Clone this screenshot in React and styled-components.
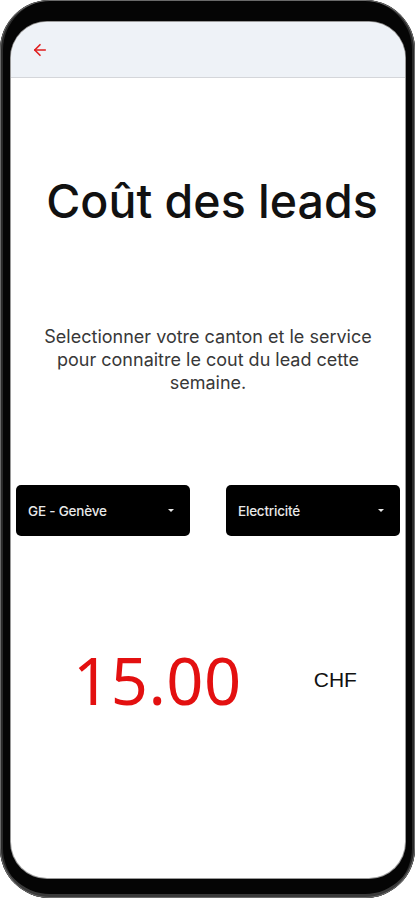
import React from "react";
import styled, { createGlobalStyle } from "styled-components";

const Global = createGlobalStyle`
  html, body { margin: 0; padding: 0; background: #ffffff; }
  body { font-family: Inter, "Noto Sans", sans-serif; }
  * { box-sizing: border-box; }
`;

const Frame = styled.div`
  width: 415px;
  height: 898px;
  background: #050505;
  border-radius: 50px;
  padding: 22px 10px 20px 11px;
  box-shadow: inset 0 0 0 1px #6a6a6a, inset 0 -4px 0 0 #3a3a3a, inset 3px 0 0 0 #2a2a2a,
    inset -3px 0 0 0 #2a2a2a;
  display: flex;
`;

const Screen = styled.div`
  flex: 1;
  background: #ffffff;
  border-radius: 36px;
  overflow: hidden;
  display: flex;
  flex-direction: column;
  box-shadow: 0 0 0 1px #9a9a9a;
`;

const Header = styled.header`
  height: 56px;
  background: #eef2f7;
  border-bottom: 1px solid #d4d6da;
  display: flex;
  align-items: center;
  padding-left: 20px;
  color: #e01e1e;
`;

const Title = styled.h1`
  margin: 95px 0 0;
  text-align: center;
  font-family: Inter, sans-serif;
  font-weight: 500;
  font-size: 46.5px;
  line-height: 56px;
  letter-spacing: 0px;
  color: #111111;
  padding-left: 8px;
`;

const Lead = styled.p`
  margin: 96px auto 0;
  width: 350px;
  text-align: center;
  font-family: Inter, sans-serif;
  font-size: 18px;
  line-height: 23px;
  color: #383838;
  letter-spacing: 0px;
`;

const Selects = styled.div`
  margin: 91px 5px 0 5px;
  display: grid;
  grid-template-columns: 174px 174px;
  justify-content: space-between;
`;

const Select = styled.div`
  height: 51px;
  background: #000000;
  border-radius: 5px;
  display: flex;
  align-items: center;
  justify-content: space-between;
  padding: 0 16px 0 12px;
  color: #e8e8e8;
  font-family: Inter, sans-serif;
  font-weight: 500;
  font-size: 13.5px;
  letter-spacing: -0.2px;
`;

const Caret = styled.span`
  width: 0;
  height: 0;
  border-left: 3px solid transparent;
  border-right: 3px solid transparent;
  border-top: 3px solid #e8e8e8;
`;

const PriceRow = styled.div`
  margin-top: 104px;
  display: flex;
  align-items: center;
  justify-content: center;
  gap: 72px;
  padding-left: 14px;
`;

const Price = styled.span`
  font-family: "Noto Sans", sans-serif;
  font-weight: 400;
  font-size: 65px;
  line-height: 80px;
  color: #e31010;
  letter-spacing: 0.5px;
`;

const Currency = styled.span`
  font-family: "Liberation Sans", Arial, sans-serif;
  font-size: 21px;
  color: #111111;
`;

function BackArrow() {
  return (
    <svg width="18" height="18" viewBox="0 0 24 24" fill="none" stroke="currentColor" strokeWidth="2.2" strokeLinecap="round" strokeLinejoin="round">
      <path d="M19 12H5" />
      <path d="M12 19l-7-7 7-7" />
    </svg>
  );
}

export default function App() {
  return (
    <>
      <Global />
      <Frame>
        <Screen>
          <Header>
            <BackArrow />
          </Header>
          <Title>Coût des leads</Title>
          <Lead>
            Selectionner votre canton et le service pour connaitre le cout du lead cette semaine.
          </Lead>
          <Selects>
            <Select>
              <span>GE - Genève</span>
              <Caret />
            </Select>
            <Select>
              <span>Electricité</span>
              <Caret />
            </Select>
          </Selects>
          <PriceRow>
            <Price>15.00</Price>
            <Currency>CHF</Currency>
          </PriceRow>
        </Screen>
      </Frame>
    </>
  );
}
